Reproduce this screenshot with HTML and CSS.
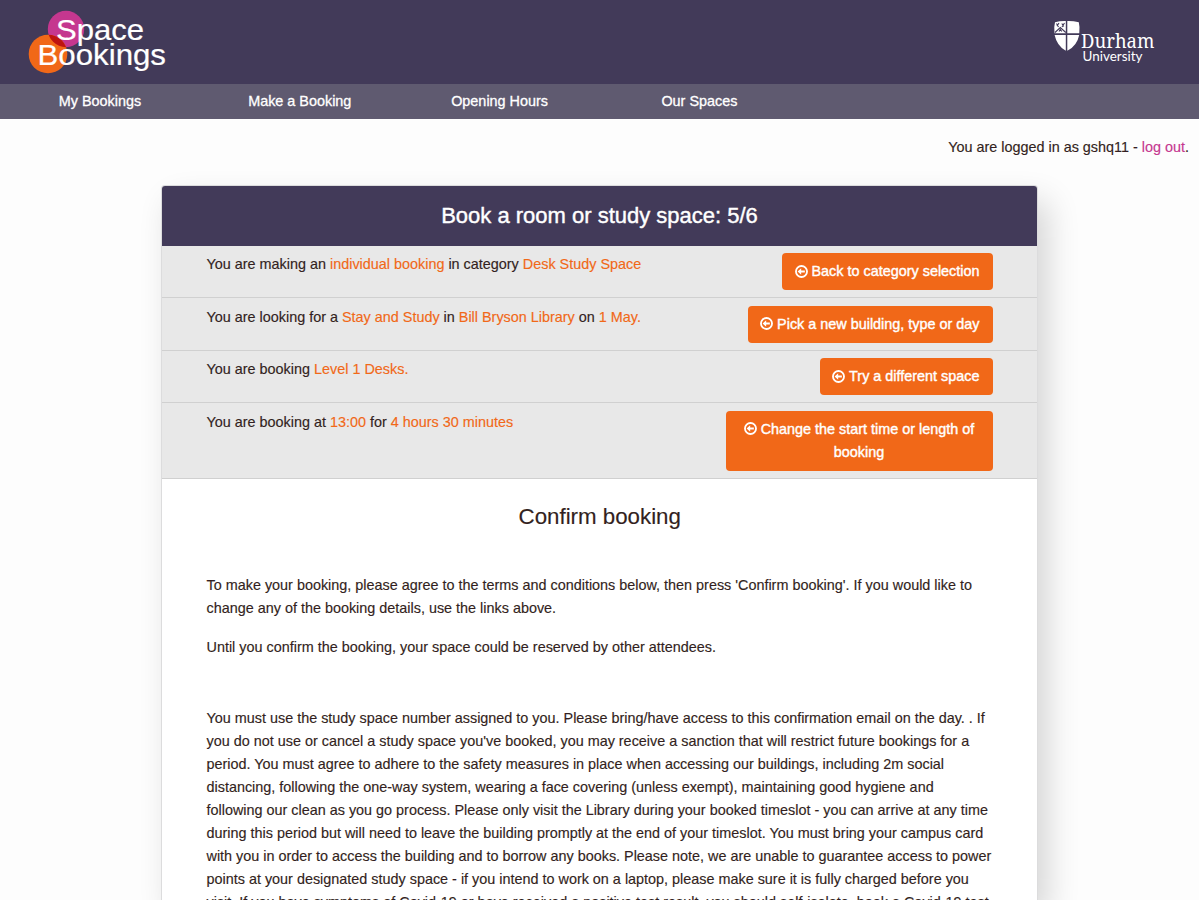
FILE: index.html
```html
<!DOCTYPE html>
<html lang="en">
<head>
<meta charset="utf-8">
<title>Space Bookings</title>
<link rel="stylesheet" href="styles.css">
</head>
<body>
<svg class="defs" width="0" height="0" aria-hidden="true">
  <symbol id="back" viewBox="0 0 12 12">
    <circle cx="6" cy="6" r="5.1" fill="none" stroke="currentColor" stroke-width="1.700"/>
    <path d="M2.400 6 5.700 2.900v2.200h3.400v1.800H5.700v2.200z" fill="currentColor"/>
  </symbol>
</svg>
<header class="banner">
  <svg class="brand" width="150" height="72" viewBox="0 0 150 72" role="img" aria-label="Space Bookings">
    <defs><clipPath id="pink"><circle cx="46" cy="23" r="18.2"/></clipPath></defs>
    <circle cx="46" cy="23" r="18.2" fill="#c5378f"/>
    <circle cx="28" cy="48" r="19.3" fill="#f16818"/>
    <circle cx="28" cy="48" r="19.3" fill="#be1410" clip-path="url(#pink)"/>
    <g class="brand-text">
      <text x="36" y="33.500" textLength="88" lengthAdjust="spacingAndGlyphs">Space</text>
      <text x="17.500" y="58.500" textLength="128.500" lengthAdjust="spacingAndGlyphs">Bookings</text>
    </g>
  </svg>
  <svg class="uni" width="108" height="50" viewBox="0 0 108 50" role="img" aria-label="Durham University">
    <path fill="#fff" d="M2 2.300Q7 .8 12.800 1V13.200H1.500Q.7 7 2 2.300ZM14.300 1Q20 .8 25.800 2.300 27 7 26.300 13.200H14.300ZM1.600 15H12.800V30.800Q4 26 1.600 15ZM14.300 15H26.200Q24 26 14.300 30.800Z"/>
    <path stroke="#423a59" stroke-width="1.100" fill="none" d="m2 12.500 5.300-5 5.500 5M3.500 3.500l2 3.500M6 3 4 6M8.800 3.500l2 3M11.500 3 9 7M6 11.500l1.300-2 1.500 2"/>
    <text class="uni-name" x="28" y="28" textLength="73.500" lengthAdjust="spacingAndGlyphs">Durham</text>
    <text class="uni-sub" x="29.500" y="41" textLength="60" lengthAdjust="spacingAndGlyphs">University</text>
  </svg>
</header>
<nav class="nav">
  <a>My Bookings</a><a>Make a Booking</a><a>Opening Hours</a><a>Our Spaces</a>
</nav>
<p class="login">You are logged in as gshq11 - <a>log out</a>.</p>
<main class="card">
  <h1 class="card-title">Book a room or study space: 5/6</h1>
  <div class="row"><p>You are making an <b>individual booking</b> in category <b>Desk Study Space</b></p>
    <a class="btn"><svg class="icon"><use href="#back"/></svg> Back to category selection</a></div>
  <div class="row"><p>You are looking for a <b>Stay and Study</b> in <b>Bill Bryson Library</b> on <b>1 May.</b></p>
    <a class="btn"><svg class="icon"><use href="#back"/></svg> Pick a new building, type or day</a></div>
  <div class="row"><p>You are booking <b>Level 1 Desks.</b></p>
    <a class="btn"><svg class="icon"><use href="#back"/></svg> Try a different space</a></div>
  <div class="row"><p>You are booking at <b>13:00</b> for <b>4 hours 30 minutes</b></p>
    <a class="btn wide"><svg class="icon"><use href="#back"/></svg> Change the start time or length of<br>booking</a></div>
  <section class="confirm">
    <h2>Confirm booking</h2>
    <p>To make your booking, please agree to the terms and conditions below, then press 'Confirm booking'. If you would like to<br>change any of the booking details, use the links above.</p>
    <p>Until you confirm the booking, your space could be reserved by other attendees.</p>
    <p class="terms">You must use the study space number assigned to you. Please bring/have access to this confirmation email on the day. . If<br>
you do not use or cancel a study space you've booked, you may receive a sanction that will restrict future bookings for a<br>
period. You must agree to adhere to the safety measures in place when accessing our buildings, including 2m social<br>
distancing, following the one-way system, wearing a face covering (unless exempt), maintaining good hygiene and<br>
following our clean as you go process. Please only visit the Library during your booked timeslot - you can arrive at any time<br>
during this period but will need to leave the building promptly at the end of your timeslot. You must bring your campus card<br>
with you in order to access the building and to borrow any books. Please note, we are unable to guarantee access to power<br>
points at your designated study space - if you intend to work on a laptop, please make sure it is fully charged before you<br>
visit. If you have symptoms of Covid-19 or have received a positive test result, you should self-isolate, book a Covid-19 test</p>
  </section>
</main>
</body>
</html>
```
FILE: styles.css
```css
* { box-sizing: border-box; }
html, body { height: 100%; overflow: hidden; }
body {
  display: flex;
  flex-direction: column;
  margin: 0;
  background: #fdfdfd;
  color: #331f21;
  font: 14.4px/23.04px "Liberation Sans", Arial, sans-serif;
  -webkit-text-stroke: .15px;
}
p, h1, h2 { margin: 0; font-weight: 400; }
.defs { position: absolute; }
.banner {
  display: flex;
  flex: none;
  justify-content: space-between;
  height: 84px;
  padding: 6px 38px 0 20px;
  background: #423a59;
}
.brand-text { fill: #fff; stroke: #fff; stroke-width: .2px; font-size: 29px; }
.uni { margin-top: 14px; }
.uni-name { fill: #fff; font: 20.5px "Noto Serif", "DejaVu Serif", serif; }
.uni-sub { fill: #fff; font: 12.8px Lato, sans-serif; }
.nav {
  display: grid;
  flex: none;
  grid-template-columns: repeat(6, 1fr);
  height: 35px;
  padding-top: 5.5px;
  background: #5f5a70;
  color: #fff;
  text-align: center;
  -webkit-text-stroke: .3px;
}
.login { flex: none; padding: 17px 10px 0 0; text-align: right; }
.login a { color: #c5378f; }
.card {
  flex: 1 0 0;
  width: 877px;
  min-height: 0;
  margin: 26px auto 0;
  border: 1px solid #dcdcdd;
  border-bottom: 0;
  border-radius: 4px 4px 0 0;
  background: #fff;
  box-shadow: 10px 16px 32px rgba(0, 0, 0, .16);
  overflow: hidden;
}
.card-title {
  height: 60px;
  background: #423a59;
  color: #fff;
  font-size: 22px;
  line-height: 60px;
  text-align: center;
  -webkit-text-stroke: .4px;
}
.row {
  display: flex;
  justify-content: space-between;
  align-items: flex-start;
  padding: 7.2px 44px 7.2px 44.5px;
  border-bottom: 1px solid #d0d0d0;
  background: #e8e8e8;
}
.row b { color: #f16818; font-weight: 400; }
.btn {
  padding: 7px 13.5px 7px 12.5px;
  border-radius: 4px;
  background: #f16818;
  color: #fff;
  text-align: center;
  white-space: nowrap;
  -webkit-text-stroke: .4px;
}
.wide { width: 267px; }
.icon { width: 13px; height: 13px; vertical-align: -1.5px; -webkit-text-stroke: 0; }
.confirm { padding: 22px 44px 22px 44.5px; white-space: nowrap; }
.confirm h2 { margin-bottom: 42px; font-size: 22.3px; line-height: 31px; text-align: center; }
.confirm p { margin-bottom: 16px; }
.confirm .terms { margin-top: 48px; }
```
